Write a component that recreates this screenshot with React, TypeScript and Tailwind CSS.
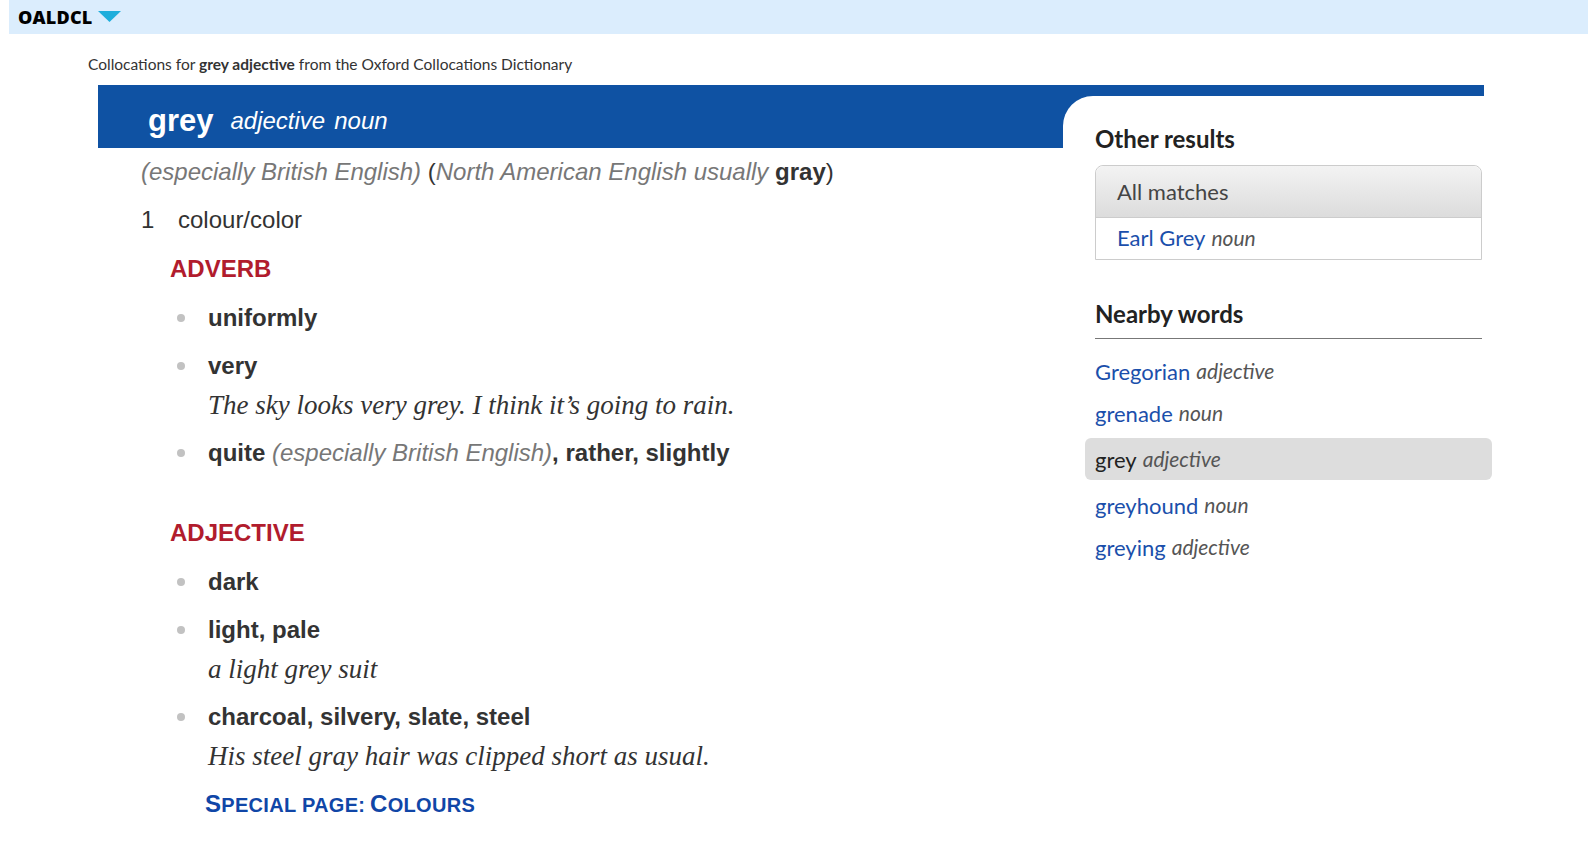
import React from "react";

const sans = "font-['Liberation_Sans',Arial,sans-serif]";
const ui = "font-['Lato','Noto_Sans',sans-serif]";
const serif = "font-['Liberation_Serif',Georgia,serif]";

type Bullet = { words: React.ReactNode; example?: string };

const adverbs: Bullet[] = [
    { words: "uniformly" },
    { words: "very", example: "The sky looks very grey. I think it\u2019s going to rain." },
    {
        words: (
            <>
                quite <span className="font-normal italic text-[#777]">(especially British English)</span>, rather, slightly
            </>
        ),
    },
];

const adjectives: Bullet[] = [
    { words: "dark" },
    { words: "light, pale", example: "a light grey suit" },
    { words: "charcoal, silvery, slate, steel", example: "His steel gray hair was clipped short as usual." },
];

const nearby = [
    { word: "Gregorian", pos: "adjective" },
    { word: "grenade", pos: "noun" },
    { word: "grey", pos: "adjective", current: true },
    { word: "greyhound", pos: "noun" },
    { word: "greying", pos: "adjective" },
];

const BulletList = ({ items }: { items: Bullet[] }) => (
    <ul className="ml-[36px] pt-[1px]">
        {items.map((it, i) => (
            <li key={i} className="mt-[18px] flex">
                <span className="w-[31px] shrink-0 flex items-center h-[30px]">
                    <span className="block w-[8px] h-[8px] rounded-full bg-[#c2c2c2]"></span>
                </span>
                <div>
                    <div className="text-[24px] leading-[30px] font-bold text-[#333]">{it.words}</div>
                    {it.example && (
                        <div className={`${serif} mt-[9px] text-[27px] leading-[30px] italic text-[#333]`}>
                            {it.example}
                        </div>
                    )}
                </div>
            </li>
        ))}
    </ul>
);

export default function App() {
    return (
        <div className="min-h-screen bg-white pb-10">
            {/* top bar */}
            <div className="ml-[9px] h-[34px] bg-[#dbedfd] flex items-center pl-[9px]">
                <span className="font-['Open_Sans',sans-serif] text-[18px] font-extrabold text-black tracking-[0.2px]">OALDCL</span>
                <svg width="23" height="12" viewBox="0 0 23 12" className="ml-[6px]">
                    <polygon points="0,0 23,0 11.5,11" fill="#1eaedc" />
                </svg>
            </div>

            <div className={`${ui} pl-[88px] pt-[20px] text-[15.5px] leading-[20px] text-[#333]`}>
                Collocations for <b>grey adjective</b> from the Oxford Collocations Dictionary
            </div>

            <div className={`${sans} ml-[98px] mt-[11px] w-[1386px] flex items-stretch`}>
                {/* entry column */}
                <div className="w-[965px] shrink-0">
                    <div className="h-[63px] bg-[#0f52a3] flex items-center pl-[50px] pt-[8px] text-white">
                        <span className="text-[31px] font-bold leading-none">grey</span>
                        <span className="ml-[17px] text-[24px] italic leading-none">adjective</span>
                        <span className="ml-[9px] text-[24px] italic leading-none">noun</span>
                    </div>

                    <div className="pl-[43px]">
                        <div className="mt-[9px] text-[24px] leading-[30px] text-[#333]">
                            <span className="italic text-[#777]">(especially British English)</span>{" "}
                            (<span className="italic text-[#777]">North American English usually</span>{" "}
                            <b>gray</b>)
                        </div>

                        <div className="mt-[18px] flex text-[24px] leading-[30px] text-[#333]">
                            <span className="w-[37px]">1</span>
                            <span>colour/color</span>
                        </div>

                        <div className="mt-[19px] ml-[29px] text-[24px] leading-[30px] font-bold text-[#b11c2d]">ADVERB</div>
                        <BulletList items={adverbs} />

                        <div className="mt-[50px] ml-[29px] text-[24px] leading-[30px] font-bold text-[#b11c2d]">ADJECTIVE</div>
                        <BulletList items={adjectives} />

                        <div className="mt-[18px] ml-[64px] leading-[30px] font-bold text-[#1046a7] tracking-[0.3px]">
                            <span className="text-[24px]">S</span>
                            <span className="text-[20px]">PECIAL PAGE:</span>{" "}
                            <span className="text-[24px]">C</span>
                            <span className="text-[20px]">OLOURS</span>
                        </div>
                    </div>
                </div>

                {/* sidebar */}
                <div className="flex-1 flex flex-col">
                    <div className="bg-[#0f52a3] pt-[11px] flex-1 flex flex-col">
                        <div className={`${ui} flex-1 bg-white rounded-tl-[30px] pl-[32px] pr-[2px] pt-[28px]`}>
                            <h2 className="text-[24px] leading-[30px] font-bold text-[#222]">Other results</h2>

                            <div className="mt-[11px] border border-[#cccccc] rounded-t-[8px]">
                                <div className="h-[52px] flex items-center pl-[21px] rounded-t-[8px] bg-gradient-to-b from-[#f3f3f3] to-[#dcdcdc] border-b border-[#cccccc] text-[22px] text-[#444]">
                                    All matches
                                </div>
                                <div className="h-[41px] flex items-center pl-[21px] pb-[2px] text-[22px]">
                                    <span className="text-[#1b4fab]">Earl Grey</span>
                                    <span className="ml-[6px] italic text-[#555] text-[21px]">noun</span>
                                </div>
                            </div>

                            <h2 className="mt-[39px] pb-[9px] border-b border-[#777] text-[24px] leading-[30px] font-bold text-[#222]">
                                Nearby words
                            </h2>

                            <ul className="mt-[11px]">
                                {nearby.map((n) =>
                                    n.current ? (
                                        <li
                                            key={n.word}
                                            className="my-[4px] -ml-[10px] -mr-[10px] h-[42px] pl-[10px] flex items-center rounded-[6px] bg-[#dddddd] text-[22px]">
                                            <span className="text-[#222]">{n.word}</span>
                                            <span className="ml-[6px] italic text-[#555] text-[21px]">{n.pos}</span>
                                        </li>
                                    ) : (
                                        <li key={n.word} className="h-[42px] flex items-center text-[22px]">
                                            <span className="text-[#1b4fab]">{n.word}</span>
                                            <span className="ml-[6px] italic text-[#555] text-[21px]">{n.pos}</span>
                                        </li>
                                    )
                                )}
                            </ul>
                        </div>
                    </div>
                </div>
            </div>
        </div>
    );
}
